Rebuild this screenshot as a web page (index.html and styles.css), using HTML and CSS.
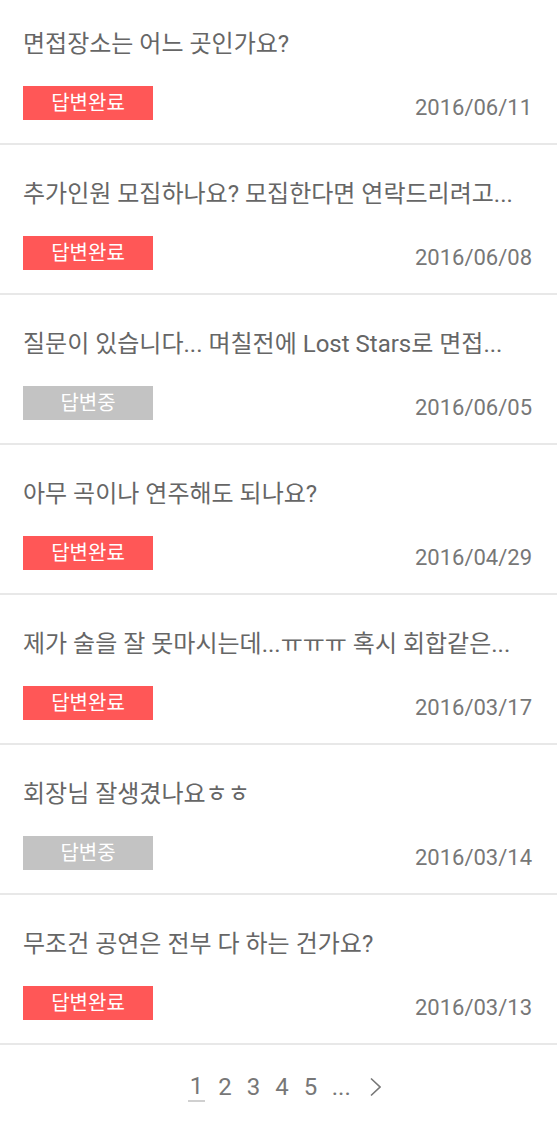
FILE: index.html
```html
<!DOCTYPE html>
<html lang="ko">
<head>
<meta charset="utf-8">
<link rel="stylesheet" href="styles.css">
</head>
<body>
<ul class="list">
  <li class="item">
    <p class="title">면접장소는 어느 곳인가요?</p>
    <div class="meta"><span class="badge done">답변완료</span><span class="date">2016/06/11</span></div>
  </li>
  <li class="item">
    <p class="title">추가인원 모집하나요? 모집한다면 연락드리려고...</p>
    <div class="meta"><span class="badge done">답변완료</span><span class="date">2016/06/08</span></div>
  </li>
  <li class="item">
    <p class="title">질문이 있습니다... 며칠전에 Lost Stars로 면접...</p>
    <div class="meta"><span class="badge wait">답변중</span><span class="date">2016/06/05</span></div>
  </li>
  <li class="item">
    <p class="title">아무 곡이나 연주해도 되나요?</p>
    <div class="meta"><span class="badge done">답변완료</span><span class="date">2016/04/29</span></div>
  </li>
  <li class="item">
    <p class="title">제가 술을 잘 못마시는데...ㅠㅠㅠ 혹시 회합같은...</p>
    <div class="meta"><span class="badge done">답변완료</span><span class="date">2016/03/17</span></div>
  </li>
  <li class="item">
    <p class="title">회장님 잘생겼나요ㅎㅎ</p>
    <div class="meta"><span class="badge wait">답변중</span><span class="date">2016/03/14</span></div>
  </li>
  <li class="item">
    <p class="title">무조건 공연은 전부 다 하는 건가요?</p>
    <div class="meta"><span class="badge done">답변완료</span><span class="date">2016/03/13</span></div>
  </li>
</ul>
<nav class="pager">
  <a class="page current">1</a>
  <a class="page">2</a>
  <a class="page">3</a>
  <a class="page">4</a>
  <a class="page">5</a>
  <span class="dots">...</span>
  <a class="next"><svg width="11" height="20" viewBox="0 0 11 20"><polyline points="1,1.5 10,10 1,18.5" fill="none" stroke="#777" stroke-width="1.6"/></svg></a>
</nav>
</body>
</html>
```
FILE: styles.css
```css
html, body {
  margin: 0;
  padding: 0;
  background: #fff;
}
body {
  font-family: Roboto, "Noto Sans CJK KR", sans-serif;
  color: #666;
  width: 557px;
  overflow: hidden;
}
.list {
  list-style: none;
  margin: -5px 0 0 0;
  padding: 0;
}
.item {
  height: 148px;
  box-sizing: content-box;
  border-bottom: 2px solid #e8e8e8;
  padding: 0 25px 0 23px;
  display: flex;
  flex-direction: column;
}
.title {
  margin: 34px 0 0 0;
  font-size: 24px;
  line-height: 30px;
  color: #666;
  white-space: nowrap;
}
.meta {
  margin-top: 27px;
  display: flex;
  justify-content: space-between;
  align-items: flex-end;
}
.badge {
  width: 130px;
  height: 34px;
  line-height: 35px;
  text-align: center;
  color: #fff;
  font-size: 20px;
}
.badge.done { background: #ff5757; }
.badge.wait { background: #c3c3c3; }
.date {
  font-size: 22px;
  line-height: 24px;
  color: #777;
}
.pager {
  display: flex;
  justify-content: center;
  align-items: center;
  height: 83px;
  padding-left: 6px;
  font-size: 24px;
  color: #777;
}
.page {
  margin: 0 7.5px;
  line-height: 28px;
}
.page.current {
  border-bottom: 2px solid #d0d0d0;
  padding: 0 2px;
  margin: 0 5.5px;
}
.dots {
  margin: 0 7px;
}
.next {
  display: flex;
  margin-left: 12px;
}
```
